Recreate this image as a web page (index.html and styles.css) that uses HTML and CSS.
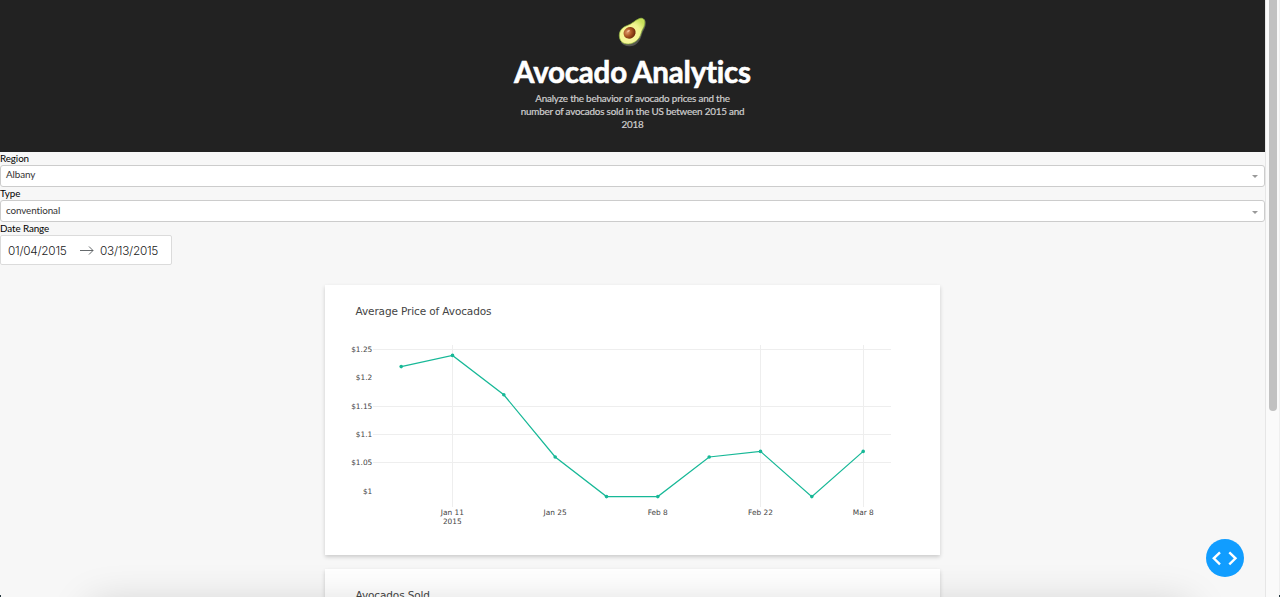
FILE: index.html
```html
<!DOCTYPE html>
<html lang="en">
<head>
<meta charset="utf-8">
<title>Avocado Analytics</title>
<link rel="stylesheet" href="styles.css">
</head>
<body>
<div class="window">
  <div class="page">
    <header class="header">
      <svg class="avocado" width="30" height="30" viewBox="0 0 30 30">
        <defs>
          <radialGradient id="flesh" cx=".4" cy=".65" r=".7"><stop offset="0" stop-color="#fff9a4"/><stop offset=".65" stop-color="#f0f490"/><stop offset="1" stop-color="#c8e05b"/></radialGradient>
          <radialGradient id="seed" cx=".38" cy=".35" r=".65"><stop offset="0" stop-color="#e09a6a"/><stop offset=".5" stop-color="#ad5825"/><stop offset="1" stop-color="#702a0b"/></radialGradient>
        </defs>
        <path d="M24 1.7C28 1 29.2 4 28.700 8c-.6 4-3 6-4 10-1.400 6.500-6.500 11.700-12.500 11.300-4 0-7-2-8.500-4z" fill="#555550"/>
        <path d="M22 1.700c4-1.500 6.400.8 5.700 5.300-.5 3.500-2.700 5.500-3.700 9.500-1.300 5.500-6.500 10.200-12.700 10.500-5.500.2-9-3.300-9-8.500 0-5 3.200-8.300 8-10C15.500 6.700 17.500 3.600 22 1.700z" fill="url(#flesh)" stroke="#8fb53c" stroke-width=".7"/>
        <ellipse cx="12.600" cy="15.800" rx="6.300" ry="5.600" transform="rotate(-35 12.600 15.800)" fill="url(#seed)"/>
        <ellipse cx="11.500" cy="14" rx="1.500" ry="1" transform="rotate(-30 11.500 14)" fill="#f0bd97"/>
      </svg>
      <h1 class="title">Avocado Analytics</h1>
      <p class="description">Analyze the behavior of avocado prices and the<br>number of avocados sold in the US between 2015 and<br>2018</p>
    </header>
    <section class="filters">
      <div class="label">Region</div>
      <div class="select"><span>Albany</span><i class="caret"></i></div>
      <div class="label">Type</div>
      <div class="select lower"><span>conventional</span><i class="caret"></i></div>
      <div class="label">Date Range</div>
      <div class="dates">
        <span>01/04/2015</span>
        <svg width="14" height="10" viewBox="0 0 14 10"><path d="M0 4.500H13M9 .500l4 4-4 4" fill="none" stroke="#55595c" stroke-width=".9"/></svg>
        <span>03/13/2015</span>
      </div>
    </section>
    <main class="charts">
      <article class="card">
        <svg class="chart" width="615" height="270" viewBox="325 285 615 270">
          <text class="heading" x="355.500" y="315" textLength="136">Average Price of Avocados</text>
          <path class="grid" d="M373 349.500H891M373 406.500H891M373 434.500H891M373 462.500H891M452.500 345V507M760.500 345V507M863.500 345V507"/>
          <g class="tick y">
            <text x="372.300" y="352">$1.25</text><text x="372.300" y="380">$1.2</text><text x="372.300" y="409">$1.15</text><text x="372.300" y="437">$1.1</text><text x="372.300" y="465">$1.05</text><text x="372.300" y="494">$1</text>
          </g>
          <g class="tick x">
            <text x="452.300" y="515">Jan 11</text><text x="452.300" y="524">2015</text><text x="555.200" y="515">Jan 25</text><text x="657.700" y="515">Feb 8</text><text x="760.500" y="515">Feb 22</text><text x="863.300" y="515">Mar 8</text>
          </g>
          <polyline class="line" points="401.200,366.600 452.500,355.400 503.800,394.800 555.200,457 606.500,496.600 657.800,496.600 709.200,457 760.500,451.400 811.800,496.600 863.200,451.400"/>
          <g class="dots"><circle cx="401.200" cy="366.600" r="1.800"/><circle cx="452.500" cy="355.400" r="1.800"/><circle cx="503.800" cy="394.800" r="1.800"/><circle cx="555.200" cy="457" r="1.800"/><circle cx="606.500" cy="496.600" r="1.800"/><circle cx="657.800" cy="496.600" r="1.800"/><circle cx="709.200" cy="457" r="1.800"/><circle cx="760.500" cy="451.400" r="1.800"/><circle cx="811.800" cy="496.600" r="1.800"/><circle cx="863.200" cy="451.400" r="1.800"/></g>
        </svg>
      </article>
      <article class="card">
        <svg class="chart" width="615" height="270" viewBox="325 569 615 270">
          <text class="heading" x="355.500" y="599" textLength="74.500">Avocados Sold</text>
        </svg>
      </article>
    </main>
  </div>
  <div class="scrollbar"><div class="thumb"></div></div>
  <button class="debug" aria-label="Debug"><svg width="38" height="38" viewBox="0 0 38 38"><path d="M14 13.300 7.800 19.300 14 25.300M23.300 13.300 29.500 19.300 23.300 25.300" fill="none" stroke="#fff" stroke-width="2.400"/></svg></button>
  <div class="shade"></div>
  <i class="corner left"></i>
  <i class="corner right"></i>
</div>
</body>
</html>
```
FILE: styles.css
```css
* { box-sizing: border-box; }
body { margin: 0; background: #f7f7f7; font-family: Lato, sans-serif; font-variant-ligatures: none; }
.window { position: relative; display: flex; width: 1280px; height: 597px; overflow: hidden; }
.page { width: 1265px; height: 597px; overflow: hidden; }
.header { height: 152px; padding-top: 17px; background: #222; display: flex; flex-direction: column; align-items: center; }
.avocado { flex: none; position: relative; left: -1px; }
.title { margin: 7px 0 0; height: 38px; line-height: 36px; font-size: 29.500px; font-weight: 700; color: #fff; white-space: nowrap; letter-spacing: -.2px; word-spacing: -.8px; -webkit-text-stroke: .6px #fff; }
.description { margin: 0; line-height: 13px; font-size: 9.850px; letter-spacing: -.2px; color: #cfcfcf; text-align: center; white-space: nowrap; -webkit-text-stroke: .2px #cfcfcf; }
.label { height: 13px; line-height: 13px; font-size: 9.850px; letter-spacing: -.1px; color: #000; }
.select { height: 22px; padding: 0 6px 0 5px; border: 1px solid #ccc; border-radius: 3px; background: #fff; display: flex; align-items: center; justify-content: space-between; font-size: 9.850px; letter-spacing: -.1px; line-height: 16px; color: #333; }
.select span { padding-bottom: 4px; }
.select.lower span { padding-bottom: 2px; }
.caret { border: 3px solid transparent; border-top-color: #999; border-bottom: 0; margin-top: 1px; }
.lower .caret { margin-top: 3px; }
.dates { width: 172px; height: 30px; padding: 1px 0 0 7px; border: 1px solid #dbdbdb; border-radius: 2px; background: #fff; display: flex; align-items: center; font: 300 11.800px/28px Inter, sans-serif; letter-spacing: -.25px; color: #222; }
.dates span { width: 59px; white-space: nowrap; }
.dates svg { margin: 0 6px 0 13px; }
.charts { width: 615px; margin: 20px auto 0; display: flex; flex-direction: column; gap: 14px; }
.card { height: 270px; background: #fff; box-shadow: 0 2px 4px rgba(0,0,0,.18); }
.chart { display: block; font-family: "DejaVu Sans", sans-serif; fill: #444; }
.heading { font-size: 10.500px; }
.tick { font-size: 7.400px; }
.y { text-anchor: end; }
.x { text-anchor: middle; }
.grid { fill: none; stroke: #eee; stroke-width: 1; }
.line { fill: none; stroke: #17b897; stroke-width: 1.250; }
.dots { fill: #17b897; }
.scrollbar { width: 15px; height: 597px; padding-left: 3px; background: #fafafa; border-left: 1px solid #e6e6e6; border-right: 1px solid #efefef; }
.thumb { width: 8px; height: 411px; background: #c1c1c1; border-radius: 0 0 4px 4px; }
.debug { position: absolute; left: 1206px; top: 539px; width: 38px; height: 38px; padding: 0; border: 0; border-radius: 50%; background: #119dff; }
.debug svg { display: block; }
.shade { position: absolute; left: 95px; right: 95px; top: 609px; height: 60px; box-shadow: 0 0 42px 4px rgba(0,0,0,.18); }
.corner { position: absolute; bottom: 0; width: 1px; height: 2px; background: #26373e; }
.corner.left { left: 0; }
.corner.right { right: 0; }
```
